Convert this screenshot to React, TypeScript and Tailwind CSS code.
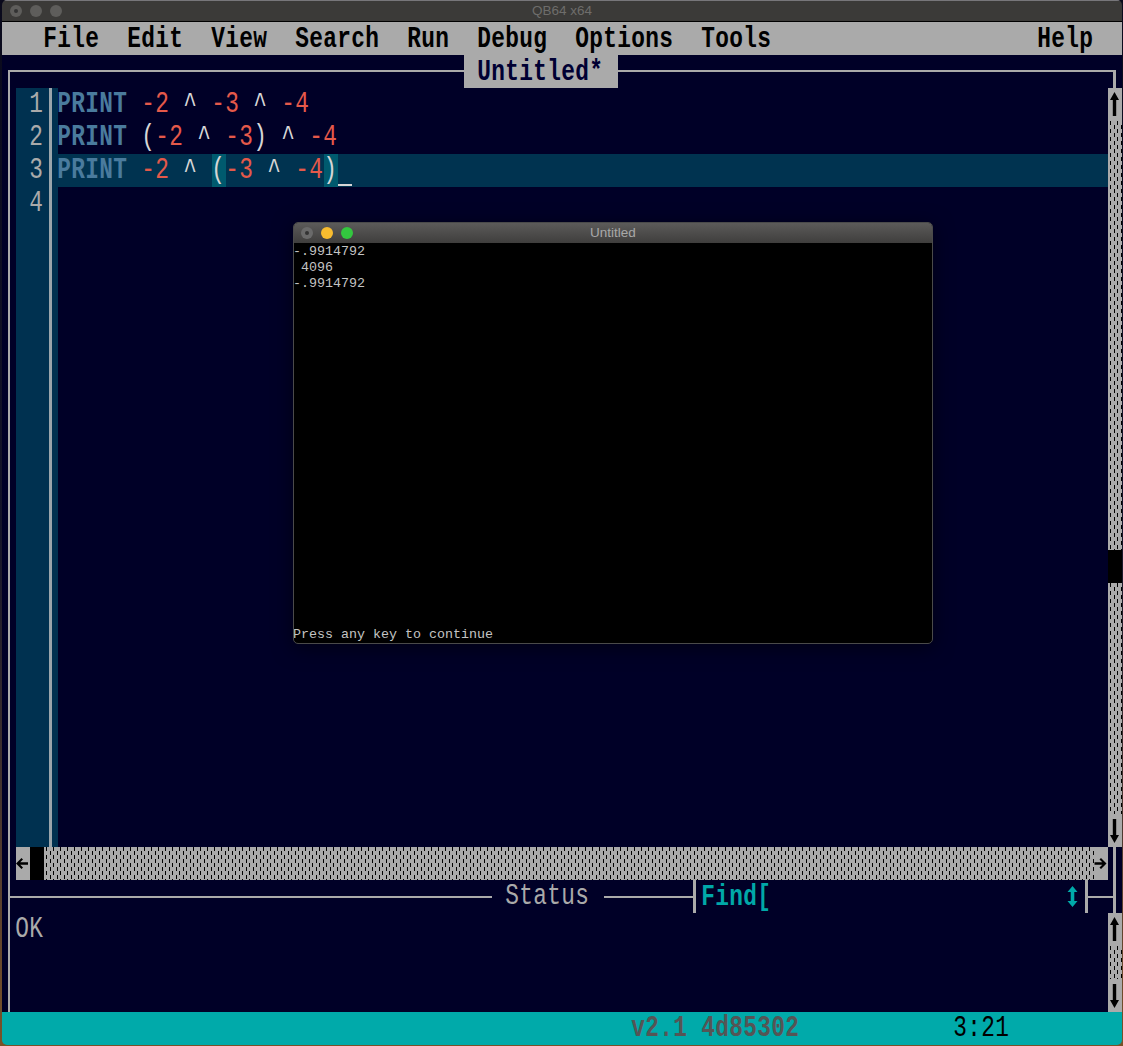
import React from 'react';

const GRAY = 'text-[#aaaaaa]';

// one 14x33 text-mode cell per character, the VGA glyphs are tall and narrow
const Cells = ({ text, className = '' }: { text: string; className?: string }) => (
  <span className={`flex h-[33px] shrink-0 text-[30px] leading-[33px] font-['Liberation_Mono',monospace] ${className}`}>
    {[...text].map((c, i) => (
      <span key={i} className="flex w-[14px] shrink-0 justify-center">
        <span className="shrink-0 -translate-x-px scale-x-[0.76]">{c}</span>
      </span>
    ))}
  </span>
);

const Shade = ({ id }: { id: string }) => (
  <svg className="block" width="100%" height="100%" shapeRendering="crispEdges">
    <defs>
      <pattern id={id} x="2" width="7" height="8" patternUnits="userSpaceOnUse">
        <rect width="7" height="8" fill="#aaaaaa" />
        <rect x="0" y="0" width="1" height="4" fill="#000" />
        <rect x="4" y="4" width="1" height="4" fill="#000" />
      </pattern>
    </defs>
    <rect width="100%" height="100%" fill={`url(#${id})`} />
  </svg>
);

const ArrowUp = () => (
  <svg width="14" height="33" viewBox="0 0 14 33" className="block">
    <path d="M6.5 4 L11 12 H8.2 V28 H4.8 V12 H2 Z" fill="#000" />
  </svg>
);

const ArrowDown = () => (
  <svg width="14" height="33" viewBox="0 0 14 33" className="block">
    <path d="M4.8 5 H8.2 V21 H11 L6.5 29 L2 21 H4.8 Z" fill="#000" />
  </svg>
);

const ArrowLeft = () => (
  <svg width="14" height="33" viewBox="0 0 14 33" className="block">
    <path d="M0 16.5 L5.5 11 L7 12.5 L4.2 15.2 H12 V17.8 H4.2 L7 20.5 L5.5 22 Z" fill="#000" />
  </svg>
);

const ArrowRight = () => (
  <svg width="14" height="33" viewBox="0 0 14 33" className="block">
    <path d="M12.5 16.5 L7 11 L5.5 12.5 L8.3 15.2 H0.5 V17.8 H8.3 L5.5 20.5 L7 22 Z" fill="#000" />
  </svg>
);

const ArrowBoth = () => (
  <svg width="14" height="33" viewBox="0 0 14 33" className="block">
    <path d="M6.5 6 L11.5 12 H8.3 V21 H11.5 L6.5 27 L1.5 21 H4.7 V12 H1.5 Z" fill="#00aaaa" />
  </svg>
);

type Token = { t: string; c: string; hl?: boolean };

const KW = 'text-[#4a7b9d] font-bold';
const NUM = 'text-[#e4594a]';
const OP = 'text-[#d6d6d6]';

const lines: Token[][] = [
  [
    { t: 'PRINT ', c: KW },
    { t: '-2 ', c: NUM },
    { t: '^ ', c: OP },
    { t: '-3 ', c: NUM },
    { t: '^ ', c: OP },
    { t: '-4', c: NUM },
  ],
  [
    { t: 'PRINT ', c: KW },
    { t: '(', c: OP },
    { t: '-2 ', c: NUM },
    { t: '^ ', c: OP },
    { t: '-3', c: NUM },
    { t: ') ^ ', c: OP },
    { t: '-4', c: NUM },
  ],
  [
    { t: 'PRINT ', c: KW },
    { t: '-2 ', c: NUM },
    { t: '^ ', c: OP },
    { t: '(', c: OP, hl: true },
    { t: '-3 ', c: NUM },
    { t: '^ ', c: OP },
    { t: '-4', c: NUM },
    { t: ')', c: OP, hl: true },
  ],
  [],
];

const Light = ({ color, dot }: { color: string; dot?: boolean }) => (
  <span className={`flex h-3 w-3 items-center justify-center rounded-full ${color}`}>
    {dot && <span className="h-1 w-1 rounded-full bg-[#333333]" />}
  </span>
);

const menuLeft = ['File', 'Edit', 'View', 'Search', 'Run', 'Debug', 'Options', 'Tools'];

export default function App() {
  return (
    <div className="relative h-[1046px] w-[1123px] overflow-hidden bg-gradient-to-b from-[#0a0a1c] via-[#14142a] to-[#7a5228] pl-[2px]">
      <div className="flex h-[1045px] w-[1120px] flex-col overflow-hidden rounded-[5px]">
        {/* title bar */}
        <div className="relative flex h-[22px] items-center gap-2 border-t border-b border-t-[#77767a] border-b-black bg-[#3b3a38] pl-2">
          <Light color="bg-[#5e5d5b]" dot />
          <Light color="bg-[#5e5d5b]" />
          <Light color="bg-[#5e5d5b]" />
          <span className="absolute inset-x-0 text-center font-['Liberation_Sans',sans-serif] text-[13.5px] text-[#6e6d6b]">QB64 x64</span>
        </div>

        {/* menu */}
        <div className="flex h-[33px] bg-[#aaaaaa] pt-px pl-[42px] pr-[28px] text-black">
          <div className="flex gap-[28px]">
            {menuLeft.map(m => (
              <Cells key={m} text={m} className="font-bold" />
            ))}
          </div>
          <div className="flex-1" />
          <Cells text="Help" className="font-bold" />
        </div>

        {/* body */}
        <div className="flex h-[957px] flex-col bg-[#000027]">
          <div className="relative mt-[15px] ml-[6px] flex h-[942px] w-[1108px] flex-col border-t-2 border-r-[3px] border-l-2 border-[#aaaaaa] pt-4">
            <div className="absolute -top-[17px] left-[454px] flex h-[33px] w-[154px] bg-[#aaaaaa] pt-px pl-[14px]">
              <Cells text="Untitled*" className="font-bold text-[#000033]" />
            </div>

            {/* editor */}
            <div className="-mr-[9px] ml-[6px] flex h-[759px]">
              <div className="flex w-[42px] shrink-0 bg-[#003150]">
                <div className={`flex w-[33px] flex-col items-end pr-[5px] ${GRAY}`}>
                  {lines.map((_, i) => (
                    <Cells key={i} text={String(i + 1)} />
                  ))}
                </div>
                <div className="w-[3px] bg-[#9aa5ab]" />
              </div>
              <div className="min-w-0 flex-1">
                {lines.map((l, i) => (
                  <div key={i} className={`flex h-[33px] ${i === 2 ? 'bg-[#003350]' : ''}`}>
                    {l.map((tok, j) => (
                      <Cells key={j} text={tok.t} className={`${tok.c} ${tok.hl ? 'bg-[#005a6e]' : ''}`} />
                    ))}
                    {i === 2 && <span className="mt-[30px] h-[2px] w-[14px] bg-[#d6d6d6]" />}
                  </div>
                ))}
              </div>
              <div className="flex w-[14px] shrink-0 flex-col bg-[#aaaaaa]">
                <ArrowUp />
                <div className="h-[429px]"><Shade id="vs1" /></div>
                <div className="h-[33px] bg-black" />
                <div className="h-[231px]"><Shade id="vs2" /></div>
                <ArrowDown />
              </div>
            </div>

            {/* horizontal scrollbar */}
            <div className="mr-[5px] ml-[6px] flex h-[33px] bg-[#aaaaaa]">
              <ArrowLeft />
              <div className="w-[14px] bg-black" />
              <div className="flex-1"><Shade id="hs" /></div>
              <ArrowRight />
            </div>

            {/* status / find row */}
            <div className={`flex h-[33px] items-center ${GRAY}`}>
              <div className="h-[2px] w-[482px] bg-[#aaaaaa]" />
              <div className="px-[14px]"><Cells text="Status" /></div>
              <div className="h-[2px] w-[89px] bg-[#aaaaaa]" />
              <div className="h-full w-[3px] bg-[#aaaaaa]" />
              <div className="ml-[6px] pt-px text-[#00a8a8]"><Cells text="Find[" className="font-bold" /></div>
              <div className="flex-1" />
              <ArrowBoth />
              <div className="ml-[5px] h-full w-[3px] bg-[#aaaaaa]" />
              <div className="h-[2px] w-[25px] bg-[#aaaaaa]" />
            </div>

            {/* output */}
            <div className="-mr-[9px] ml-[6px] flex h-[99px] justify-between">
              <div className={GRAY}><Cells text="OK" /></div>
              <div className="flex w-[14px] flex-col bg-[#aaaaaa]">
                <ArrowUp />
                <div className="h-[33px]"><Shade id="vs3" /></div>
                <ArrowDown />
              </div>
            </div>
          </div>
        </div>

        {/* status bar */}
        <div className="flex h-[33px] bg-[#00aaaa] pl-[630px]">
          <Cells text="v2.1 4d85302" className="font-bold text-[#555555]" />
          <Cells text="3:21" className="ml-[154px] text-black" />
        </div>
      </div>

      {/* program output window floating above the IDE */}
      <div className="absolute top-[222px] left-[293px] flex h-[422px] w-[640px] flex-col overflow-hidden rounded-[5px] border border-[#4a4a4a] bg-black shadow-[0_4px_20px_rgba(0,0,0,0.5)]">
        <div className="relative flex h-[20px] shrink-0 items-center gap-2 bg-gradient-to-b from-[#5c5b5a] to-[#3f3e3d] pl-[7px]">
          <Light color="bg-[#6a6a6a]" dot />
          <Light color="bg-[#f8bc2f]" />
          <Light color="bg-[#33c73f]" />
          <span className="absolute inset-x-0 pt-px text-center font-['Liberation_Sans',sans-serif] text-[13.5px] text-[#a8a8a8]">Untitled</span>
        </div>
        <pre className="-ml-px flex-1 pt-px font-['Liberation_Mono',monospace] text-[13.33px] leading-[16px] text-[#c4c4c4]">{'-.9914792\n 4096\n-.9914792'}</pre>
        <pre className="-ml-px h-[17px] pt-px font-['Liberation_Mono',monospace] text-[13.33px] leading-[16px] text-[#c4c4c4]">Press any key to continue</pre>
      </div>
    </div>
  );
}
